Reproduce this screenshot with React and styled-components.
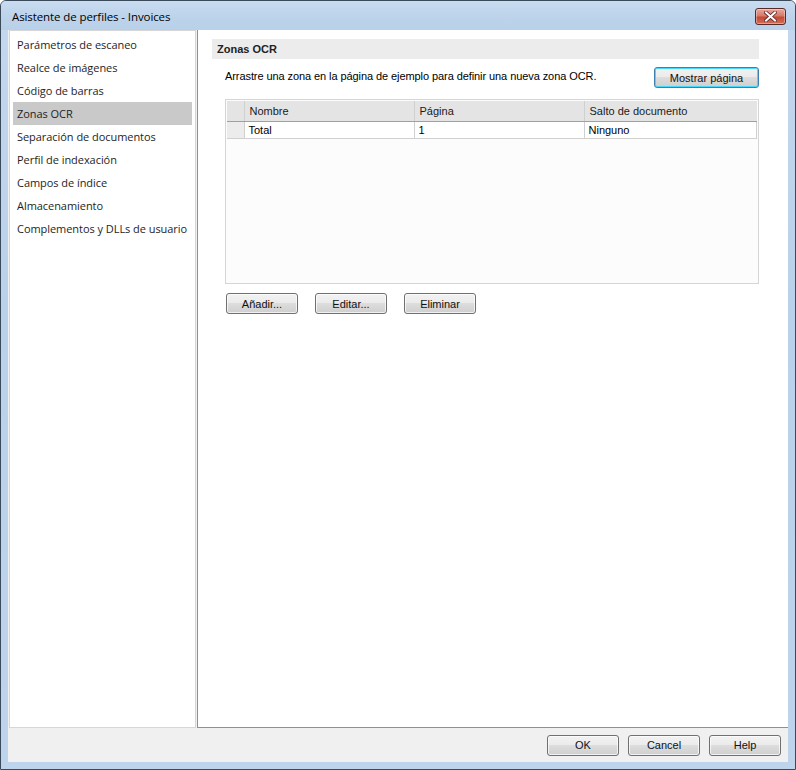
import React, { useState } from 'react';
import styled, { createGlobalStyle } from 'styled-components';

const GlobalStyle = createGlobalStyle`
  html, body {
    margin: 0;
    padding: 0;
    background: #ffffff;
  }
  * {
    box-sizing: border-box;
  }
`;

const Window = styled.div`
  width: 796px;
  height: 770px;
  display: flex;
  flex-direction: column;
  border: 1px solid #3b4a5a;
  border-radius: 6px 6px 0 0;
  background: linear-gradient(180deg, #c4d8ee 0%, #b9d1ea 40%, #bed4ec 100%);
  overflow: hidden;
  font-family: 'Liberation Sans', Arial, sans-serif;
  font-size: 11px;
  color: #000;
`;

const TitleBar = styled.div`
  height: 29px;
  flex: none;
  display: flex;
  align-items: center;
  justify-content: space-between;
  padding: 0 9px 0 11px;
  background: linear-gradient(180deg, #c9dcf1 0%, #bcd3ea 55%, #b8d0e9 100%);
`;

const TitleText = styled.span`
  font-family: 'Open Sans', 'Noto Sans', sans-serif;
  font-size: 11.5px;
  color: #000;
  letter-spacing: -0.1px;
  padding-top: 2px;
`;

const CloseButton = styled.button`
  width: 31px;
  height: 17px;
  margin-top: 1px;
  border: 1px solid #5a2a2a;
  border-radius: 3px;
  padding: 0;
  display: flex;
  align-items: center;
  justify-content: center;
  background: linear-gradient(180deg, #e7a99c 0%, #d77a6a 45%, #c44a35 55%, #d0705a 100%);
  box-shadow: inset 0 0 0 1px rgba(255, 255, 255, 0.35);
`;

const Client = styled.div`
  flex: 1;
  display: flex;
  flex-direction: column;
  margin: 0 7px 7px 7px;
  background: #f0f0f0;
`;

const Body = styled.div`
  height: 698px;
  display: flex;
  gap: 1px;
  padding-left: 1px;
`;

const Sidebar = styled.ul`
  width: 187px;
  margin: 0;
  padding: 2px 3px 0 3px;
  list-style: none;
  background: #fff;
  border: 1px solid #d6d6d6;
`;

const NavItem = styled.li`
  height: 23px;
  line-height: 23px;
  padding-left: 4px;
  font-family: 'Open Sans', 'Noto Sans', sans-serif;
  font-size: 11px;
  color: #1e1e1e;
  letter-spacing: -0.05px;
  white-space: nowrap;
  background: ${(p) => (p.$active ? '#c9c9c9' : 'transparent')};
  cursor: default;
`;

const Content = styled.div`
  flex: 1;
  background: #fff;
  border-left: 1px solid #8f9092;
  border-bottom: 1px solid #8f9092;
  padding: 9px 29px 0 14px;
`;

const SectionHeader = styled.div`
  height: 20px;
  line-height: 20px;
  padding-left: 5px;
  background: #ececec;
  font-weight: bold;
  font-size: 11px;
  color: #222;
`;

const Instruction = styled.div`
  display: flex;
  align-items: center;
  justify-content: space-between;
  padding: 8px 0 0 13px;

  span {
    padding-bottom: 3px;
    letter-spacing: -0.08px;
  }
`;

const Button = styled.button`
  width: ${(p) => p.$w || 72}px;
  height: 21px;
  padding: 0;
  font-family: 'Liberation Sans', Arial, sans-serif;
  font-size: 11px;
  font-weight: 400;
  color: #111;
  border: 1px solid ${(p) => (p.$focused ? '#3c7fb1' : '#707070')};
  border-radius: 3px;
  background: linear-gradient(180deg, #f2f2f2 0%, #ebebeb 49%, #dddddd 50%, #cfcfcf 100%);
  box-shadow: inset 0 0 0 1px ${(p) => (p.$focused ? '#48d8fb' : 'rgba(255,255,255,0.7)')};
  cursor: default;
`;

const Grid = styled.div`
  margin: 11px 0 0 13px;
  height: 185px;
  border: 1px solid #d5d5d5;
  background: #fcfcfc;
  padding: 1px;
`;

const Table = styled.table`
  border-collapse: collapse;
  width: 100%;
  table-layout: fixed;
`;

const HeadCell = styled.th`
  height: 20px;
  padding: 0 0 0 5px;
  text-align: left;
  font-weight: normal;
  background: #e4e4e4;
  border-bottom: 1px solid #a0a0a0;
  border-left: 1px solid #d0d0d0;
  color: #1a1a1a;
  &:first-child {
    border-left: none;
  }
`;

const Cell = styled.td`
  height: 17px;
  padding: 0 0 0 4px;
  background: #fff;
  border: 1px solid #d0d0d0;
  border-top: none;
  white-space: nowrap;
`;

const RowHead = styled.td`
  background: #ececec;
  border-bottom: 1px solid #d0d0d0;
  padding: 0;
`;

const ActionRow = styled.div`
  display: flex;
  gap: 17px;
  margin: 9px 0 0 14px;
`;

const Footer = styled.div`
  flex: 1;
  display: flex;
  justify-content: flex-end;
  align-items: center;
  gap: 9px;
  padding: 0 7px 0 0;
`;

const columns = ['Nombre', 'Página', 'Salto de documento'];

const rows = [{ name: 'Total', page: '1', split: 'Ninguno' }];

const navItems = [
  'Parámetros de escaneo',
  'Realce de imágenes',
  'Código de barras',
  'Zonas OCR',
  'Separación de documentos',
  'Perfil de indexación',
  'Campos de índice',
  'Almacenamiento',
  'Complementos y DLLs de usuario',
];

export default function App() {
  const [selected, setSelected] = useState('Zonas OCR');

  return (
    <>
      <GlobalStyle />
      <Window>
        <TitleBar>
          <TitleText>Asistente de perfiles - Invoices</TitleText>
          <CloseButton aria-label="Cerrar">
            <svg width="13" height="11" viewBox="0 0 13 11">
              <path
                d="M2 1.5 L11 9.5 M11 1.5 L2 9.5"
                stroke="#5b2626"
                strokeWidth="3.6"
                strokeLinecap="square"
              />
              <path
                d="M2 1.5 L11 9.5 M11 1.5 L2 9.5"
                stroke="#ffffff"
                strokeWidth="2"
                strokeLinecap="square"
              />
            </svg>
          </CloseButton>
        </TitleBar>
        <Client>
          <Body>
            <Sidebar>
              {navItems.map((item) => (
                <NavItem key={item} $active={item === selected} onClick={() => setSelected(item)}>
                  {item}
                </NavItem>
              ))}
            </Sidebar>
            <Content>
              <SectionHeader>Zonas OCR</SectionHeader>
              <Instruction>
                <span>Arrastre una zona en la página de ejemplo para definir una nueva zona OCR.</span>
                <Button $w={105} $focused>Mostrar página</Button>
              </Instruction>
              <Grid>
                <Table>
                  <colgroup>
                    <col style={{ width: 17 }} />
                    <col style={{ width: 170 }} />
                    <col style={{ width: 170 }} />
                    <col />
                  </colgroup>
                  <thead>
                    <tr>
                      <HeadCell />
                      {columns.map((c) => (
                        <HeadCell key={c}>{c}</HeadCell>
                      ))}
                    </tr>
                  </thead>
                  <tbody>
                    {rows.map((r) => (
                      <tr key={r.name}>
                        <RowHead />
                        <Cell>{r.name}</Cell>
                        <Cell>{r.page}</Cell>
                        <Cell>{r.split}</Cell>
                      </tr>
                    ))}
                  </tbody>
                </Table>
              </Grid>
              <ActionRow>
                <Button>Añadir...</Button>
                <Button>Editar...</Button>
                <Button>Eliminar</Button>
              </ActionRow>
            </Content>
          </Body>
          <Footer>
            <Button>OK</Button>
            <Button>Cancel</Button>
            <Button>Help</Button>
          </Footer>
        </Client>
      </Window>
    </>
  );
}
